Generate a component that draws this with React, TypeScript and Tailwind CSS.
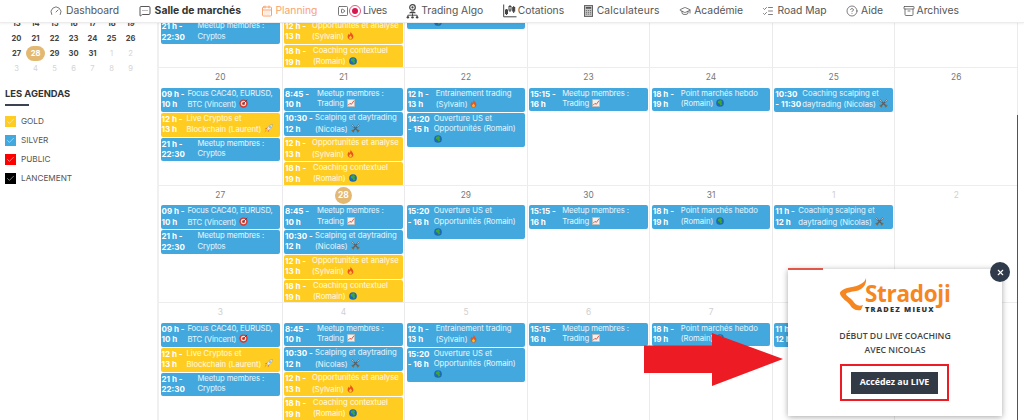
import React from "react";
import { Gauge, MessageSquareMore, CalendarDays, SquarePlay, GraduationCap, ListChecks, CircleHelp, Archive, Check, X } from "lucide-react";

const Target = () => (
  <svg viewBox="0 0 12 12" className="w-[9px] h-[9px] inline-block align-[-1.5px] ml-[3px]">
    <circle cx="6" cy="6" r="5.5" fill="#d9362b" />
    <circle cx="6" cy="6" r="3.6" fill="#f3e6df" />
    <circle cx="6" cy="6" r="2" fill="#d9362b" />
    <path d="M6 6 L11 1" stroke="#335" strokeWidth="1" />
  </svg>
);
const Chart = () => (
  <svg viewBox="0 0 12 12" className="w-[8px] h-[8px] inline-block align-[-1px] ml-[3px]">
    <rect x="0.5" y="0.5" width="11" height="11" fill="#f4f1ec" stroke="#b9b4ad" />
    <path d="M1.5 9.5 L4.5 6.5 L6.5 8 L10.5 2.5" fill="none" stroke="#df4a3e" strokeWidth="1.4" />
  </svg>
);
const Fire = () => (
  <svg viewBox="0 0 12 14" className="w-[7px] h-[9px] inline-block align-[-1.5px] ml-[3px]">
    <path d="M6 0 C7 3 11 5 11 9 C11 12 8.5 14 6 14 C3.5 14 1 12 1 9 C1 6.5 2.5 5.5 3 4 C4 5 4.5 5.5 4.5 6 C5.5 4 6.5 2 6 0Z" fill="#e8541c" />
    <path d="M6 7 C7 8.5 8.5 9.5 8.5 11 C8.5 12.5 7 13.5 6 13.5 C5 13.5 3.5 12.5 3.5 11 C3.5 9.5 5.5 9 6 7Z" fill="#fbc02d" />
  </svg>
);
const Swords = () => (
  <svg viewBox="0 0 12 12" className="w-[9px] h-[9px] inline-block align-[-1.5px] ml-[3px]">
    <path d="M1 1 L10 10 M11 1 L2 10" stroke="#56606a" strokeWidth="1.7" />
    <path d="M1 8 L4 11 M11 8 L8 11" stroke="#8a6a3c" strokeWidth="1.7" />
    <path d="M1 1 L3.5 3.5 M11 1 L8.5 3.5" stroke="#d6d8da" strokeWidth="1" />
  </svg>
);
const Globe = () => (
  <svg viewBox="0 0 12 12" className="w-[8px] h-[8px] inline-block align-[-1px] ml-[3px]">
    <circle cx="6" cy="6" r="5.8" fill="#1c6bb5" />
    <path d="M3 3 L7 1.5 L9 3.5 L8 6 L9.5 8 L7 10 L5.5 7 L3 6Z" fill="#3fa535" />
  </svg>
);
const Rocket = () => (
  <svg viewBox="0 0 12 12" className="w-[9px] h-[9px] inline-block align-[-1.5px] ml-[3px]">
    <path d="M11.5 0.5 C8 0.8 5 3 3.5 6.5 L5.5 8.5 C9 7 11.2 4 11.5 0.5Z" fill="#e4e6ea" stroke="#7c8794" strokeWidth="0.5" />
    <circle cx="8" cy="4" r="1.1" fill="#4a90c2" />
    <path d="M3.5 6.5 L1.5 7 L3 5 Z M5.5 8.5 L5 10.5 L7 9 Z" fill="#d9362b" />
    <path d="M3.8 8.2 L0.5 11.5 L2 8 Z" fill="#f39c1f" />
  </svg>
);

type Ev = { t: [string, string]; w: string; l: string[]; c: "b" | "y"; e?: React.ReactNode; own?: boolean; s?: string };

const focus: Ev = { t: ["09 h -", "10 h"], w: "w-[26px]", l: ["Focus CAC40, EURUSD,", "BTC (Vincent)"], c: "b", e: <Target />, s: "tracking-[-0.12px]" };
const live: Ev = { t: ["12 h -", "13 h"], w: "w-[25px]", l: ["Live Cryptos et", "Blockchain (Laurent)"], c: "y", e: <Rocket /> };
const cryptos: Ev = { t: ["21 h -", "22:30"], w: "w-[36px]", l: ["Meetup membres :", "Cryptos"], c: "b", s: "tracking-[-0.1px]" };
const trading: Ev = { t: ["8:45 -", "10 h"], w: "w-[32px]", l: ["Meetup membres :", "Trading"], c: "b", e: <Chart />, s: "tracking-[-0.1px]" };
const scalp: Ev = { t: ["10:30 -", "12 h"], w: "w-[30px]", l: ["Scalping et daytrading", "(Nicolas)"], c: "b", e: <Swords /> };
const oppo: Ev = { t: ["12 h -", "13 h"], w: "w-[27px]", l: ["Opportunités et analyse", "(Sylvain)"], c: "y", e: <Fire /> };
const ctx: Ev = { t: ["18 h -", "19 h"], w: "w-[28px]", l: ["Coaching contextuel", "(Romain)"], c: "y", e: <Globe /> };
const entr: Ev = { t: ["12 h -", "13 h"], w: "w-[28px]", l: ["Entrainement trading", "(Sylvain)"], c: "b", e: <Fire /> };
const ouv14: Ev = { t: ["14:20", "- 15 h"], w: "w-[26px]", l: ["Ouverture US et", "Opportunités (Romain)", ""], c: "b", e: <Globe />, own: true };
const ouv15: Ev = { t: ["15:20", "- 16 h"], w: "w-[26px]", l: ["Ouverture US et", "Opportunités (Romain)", ""], c: "b", e: <Globe />, own: true };
const meet15: Ev = { t: ["15:15 -", "16 h"], w: "w-[32px]", l: ["Meetup membres :", "Trading"], c: "b", e: <Chart />, s: "tracking-[-0.1px]" };
const point: Ev = { t: ["18 h -", "19 h"], w: "w-[28px]", l: ["Point marchés hebdo", "(Romain)"], c: "b", e: <Globe /> };
const coach1: Ev = { t: ["10:30", "- 11:30"], w: "w-[27px]", l: ["Coaching scalping et", "daytrading (Nicolas)"], c: "b", e: <Swords /> };
const coach2: Ev = { t: ["11 h -", "12 h"], w: "w-[23px]", l: ["Coaching scalping et", "daytrading (Nicolas)"], c: "b", e: <Swords /> };

type Day = { d: string; muted?: boolean; today?: boolean; ev: Ev[] };
const weeks: Day[][] = [
  [
    { d: "13", ev: [focus, live, cryptos] },
    { d: "14", ev: [trading, scalp, oppo, ctx] },
    { d: "15", ev: [entr, ouv14] },
    { d: "16", ev: [] }, { d: "17", ev: [] }, { d: "18", ev: [] }, { d: "19", ev: [] },
  ],
  [
    { d: "20", ev: [focus, live, cryptos] },
    { d: "21", ev: [trading, scalp, oppo, ctx] },
    { d: "22", ev: [entr, ouv14] },
    { d: "23", ev: [meet15] },
    { d: "24", ev: [point] },
    { d: "25", ev: [coach1] },
    { d: "26", ev: [] },
  ],
  [
    { d: "27", ev: [focus, cryptos] },
    { d: "28", today: true, ev: [trading, scalp, oppo, ctx] },
    { d: "29", ev: [ouv15] },
    { d: "30", ev: [meet15] },
    { d: "31", ev: [point] },
    { d: "1", muted: true, ev: [coach2] },
    { d: "2", muted: true, ev: [] },
  ],
  [
    { d: "3", muted: true, ev: [focus, live, cryptos] },
    { d: "4", muted: true, ev: [trading, scalp, oppo, ctx] },
    { d: "5", muted: true, ev: [entr, ouv15] },
    { d: "6", muted: true, ev: [meet15] },
    { d: "7", muted: true, ev: [point] },
    { d: "8", muted: true, ev: [coach2] },
    { d: "9", muted: true, ev: [] },
  ],
];

function Event({ ev }: { ev: Ev }) {
  return (
    <div className={`flex rounded-[2px] py-px pl-px leading-[10.8px] ${ev.c === "b" ? "bg-[#42a8de]" : "bg-[#ffcd22]"}`}>
      <div className={`${ev.w} shrink-0 whitespace-nowrap text-[8px] font-bold text-white`}>
        <div>{ev.t[0]}</div>
        <div>{ev.t[1]}</div>
      </div>
      <div className={`min-w-0 whitespace-nowrap text-[7.7px] text-white/90 ${ev.s ?? ""}`}>
        {ev.l.map((line, i) => (
          <div key={i}>
            {line}
            {i === ev.l.length - 1 ? (ev.own ? <span className="-ml-[3px]">{ev.e}</span> : ev.e) : null}
          </div>
        ))}
      </div>
    </div>
  );
}

const AlgoIcon = () => (
  <svg viewBox="0 0 14 16" className="w-[13px] h-[15px]" fill="none">
    <circle cx="7" cy="3.6" r="3" fill="#fff" stroke="#444" strokeWidth="1.3" />
    <circle cx="7" cy="3.6" r="1.2" fill="#444" />
    <path d="M3.5 10 C3.5 7.5 10.5 7.5 10.5 10 Z" fill="#444" />
    <path d="M7 10 V13 M2 14 V12 H12 V14" stroke="#444" strokeWidth="1" />
    <circle cx="2" cy="14.3" r="1.3" fill="#444" />
    <circle cx="7" cy="14.3" r="1.3" fill="#444" />
    <circle cx="12" cy="14.3" r="1.3" fill="#444" />
  </svg>
);
const CotIcon = () => (
  <svg viewBox="0 0 14 14" className="w-[14px] h-[14px]" fill="none" stroke="#444" strokeWidth="1">
    <path d="M0.7 0.5 V12.8 H13.5" />
    <path d="M3.5 5 V11 M7 1 V8 M10.7 2 V9" />
    <rect x="2.5" y="6" width="2" height="3.6" fill="#444" />
    <rect x="6" y="2.5" width="2" height="3.6" fill="#fff" />
    <rect x="9.7" y="3.5" width="2" height="3.6" fill="#444" />
  </svg>
);
const CalcIcon = () => (
  <svg viewBox="0 0 10 13" className="w-[9px] h-[12px]">
    <rect x="0.5" y="0.5" width="9" height="12" fill="#c9c9c9" stroke="#555" />
    <rect x="2" y="2" width="6" height="2" fill="#555" />
    <path d="M2 6h1.4M4.3 6h1.4M6.6 6h1.4M2 8h1.4M4.3 8h1.4M6.6 8h1.4M2 10h1.4M4.3 10h1.4M6.6 10h1.4" stroke="#666" strokeWidth="1" />
  </svg>
);

const iconCls = "w-[12px] h-[12px] text-[#555] shrink-0";

function Nav() {
  const item = "flex items-center whitespace-nowrap";
  return (
    <nav className="relative z-10 flex h-[23px] shrink-0 items-center gap-[19.5px] bg-white pl-[50px] text-[10.3px] text-[#555] border-b border-[#ececec] shadow-[0_1px_2px_rgba(0,0,0,0.06)]">
      <div className={`${item} gap-[4px]`}><Gauge className={iconCls} strokeWidth={1.6} /><span>Dashboard</span></div>
      <div className={`${item} gap-[4px] font-bold text-[#333]`}><MessageSquareMore className="w-[12px] h-[12px] text-[#444] shrink-0" strokeWidth={1.8} /><span className="text-[10.4px]">Salle de marchés</span></div>
      <div className={`${item} gap-[3px] text-[#f9a26c]`}><CalendarDays className="w-[12px] h-[12px] text-[#f9a26c] shrink-0" strokeWidth={2} /><span>Planning</span></div>
      <div className={`${item} gap-[0.5px]`}>
        <SquarePlay className={iconCls} strokeWidth={1.6} />
        <span className="flex h-[12px] w-[12px] items-center justify-center rounded-full border border-[#e8557a]"><span className="h-[6px] w-[6px] rounded-full bg-[#d6174f]" /></span>
        <span className="ml-[1px] tracking-[-0.3px]">Lives</span>
      </div>
      <div className={`${item} gap-[2px]`}><AlgoIcon /><span>Trading Algo</span></div>
      <div className={`${item} gap-[1px]`}><CotIcon /><span>Cotations</span></div>
      <div className={`${item} gap-[4px]`}><CalcIcon /><span className="tracking-[0.2px]">Calculateurs</span></div>
      <div className={`${item} gap-[3px]`}><GraduationCap className={iconCls} strokeWidth={1.6} /><span>Académie</span></div>
      <div className={`${item} gap-[3px]`}><ListChecks className={iconCls} strokeWidth={1.5} /><span>Road Map</span></div>
      <div className={`${item} gap-[3px]`}><CircleHelp className={iconCls} strokeWidth={1.5} /><span>Aide</span></div>
      <div className={`${item} gap-[2px]`}><Archive className={iconCls} strokeWidth={1.6} /><span>Archives</span></div>
    </nav>
  );
}

const mini = [
  ["13", "14", "15", "16", "17", "18", "19"],
  ["20", "21", "22", "23", "24", "25", "26"],
  ["27", "28", "29", "30", "31", "1", "2"],
  ["3", "4", "5", "6", "7", "8", "9"],
];
const agendas = [
  { n: "GOLD", c: "bg-[#ffcd22]" },
  { n: "SILVER", c: "bg-[#42a8de]" },
  { n: "PUBLIC", c: "bg-[#ff0000]" },
  { n: "LANCEMENT", c: "bg-black" },
];

function Sidebar() {
  return (
    <aside className="w-[159px] shrink-0 border-r-2 border-[#f0f0f0] pl-[5px] -mt-[7px]">
      <div className="ml-[2px] grid w-[133px] grid-cols-7 text-[7.6px] font-bold text-[#444]">
        {mini.map((row, r) =>
          row.map((d, i) => {
            const muted = r === 3 || (r === 2 && i > 4);
            const today = d === "28";
            return (
              <div key={`${r}-${i}`} className="flex h-[15px] items-center justify-center">
                <span className={today ? "flex h-[15px] w-[19px] items-center justify-center rounded-full bg-[#e3b873] text-white" : muted ? "text-[#d4d4d4] font-normal" : ""}>{d}</span>
              </div>
            );
          })
        )}
      </div>
      <h3 className="mt-[11px] text-[9.4px] font-bold leading-[14px] text-[#333]">LES AGENDAS</h3>
      <div className="mt-[3px] h-[2px] w-[24px] bg-[#3b4252]" />
      <ul className="mt-[10px] flex flex-col gap-[8px]">
        {agendas.map((a) => (
          <li key={a.n} className="flex items-center gap-[5px] text-[8.2px] leading-[11px] text-[#555]">
            <span className={`flex h-[11px] w-[11px] items-center justify-center ${a.c}`}>
              <Check className="h-[9px] w-[9px] text-white/85" strokeWidth={1.5} />
            </span>
            {a.n}
          </li>
        ))}
      </ul>
    </aside>
  );
}

function Calendar() {
  return (
    <section className="-mt-[72.5px] w-[859px] shrink-0 border-r border-[#ebebeb]">
      {weeks.map((w, r) => (
        <div key={r} className="grid h-[117.5px] grid-cols-7 border-b border-[#ededed]">
          {w.map((c, i) => (
            <div key={i} className="min-w-0 overflow-hidden border-l border-[#ebebeb] first:border-l-0 px-[1.5px]">
              <div className="flex h-[19.5px] items-center justify-center text-[8.4px]">
                {c.today ? (
                  <span className="flex h-[17px] w-[17px] items-center justify-center rounded-full bg-[#e3b873] font-bold text-white">{c.d}</span>
                ) : (
                  <span className={c.muted ? "text-[#cfcfcf]" : "text-[#777]"}>{c.d}</span>
                )}
              </div>
              <div className="flex flex-col gap-px">
                {c.ev.map((e, k) => <Event key={k} ev={e} />)}
              </div>
            </div>
          ))}
        </div>
      ))}
    </section>
  );
}

function Popup() {
  return (
    <div className="absolute left-[788px] top-[269px] h-[147px] w-[214px] bg-white shadow-[0_1px_6px_rgba(0,0,0,0.35)] z-20 flex flex-col items-center">
      <div className="absolute left-0 -top-[1px] h-[2px] w-[35px] bg-[#e0574a]" />
      <button className="absolute -right-[8px] -top-[7px] flex h-[20px] w-[20px] items-center justify-center rounded-full bg-[#2f3a4a]">
        <X className="h-[9px] w-[9px] text-white" strokeWidth={3} />
      </button>
      <div className="relative mt-[9px] h-[34px] w-[112px]">
        <svg viewBox="0 0 40 34" className="absolute left-0 top-0 h-[34px] w-[40px]" fill="none">
          <path d="M27 0 C26 5 19 8 13 9 C6 10 0 13 1 16 C3 21 8 23 11 27 C13 31 17 33 22 32 L24 27 C19 29 16 26 14 23 C12 20 7 18 7 16 C8 14 13 14 17 13 C23 12 28 7 27 0Z" fill="#f6861f" />
        </svg>
        <div className="absolute left-[26px] top-[2px] text-[22.5px] font-bold leading-[28px] tracking-[-0.3px] text-[#f6861f] [font-family:'Open_Sans',sans-serif]">Stradoji</div>
        <div className="absolute left-[26px] top-[27px] whitespace-nowrap text-[7.4px] font-extrabold leading-[8px] tracking-[1.2px] text-[#333] [font-family:'Open_Sans',sans-serif]">TRADEZ MIEUX</div>
      </div>
      <p className="mt-[17px] text-center text-[8.7px] font-semibold leading-[14px] text-[#444] [font-family:'Open_Sans',sans-serif]">
        DÉBUT DU LIVE COACHING<br />AVEC NICOLAS
      </p>
      <div className="mt-[7px] border-[2px] border-[#ed1c24] px-[9px] py-[5.5px] ml-[-1px]">
        <button className="flex h-[22px] w-[87px] items-center justify-center bg-[#323a45] text-[8.8px] font-bold text-white [font-family:'Open_Sans',sans-serif]">Accédez au LIVE</button>
      </div>
    </div>
  );
}

export default function App() {
  return (
    <div className="relative flex h-[420px] w-[1024px] flex-col overflow-hidden bg-white [font-family:Inter,'Noto_Sans',sans-serif]">
      <Nav />
      <main className="flex min-h-0 flex-1 overflow-hidden">
        <Sidebar />
        <Calendar />
      </main>
      <div className="absolute left-[1017px] top-[115px] h-[305px] w-px bg-[#555]" />
      <svg viewBox="0 0 140 54" className="absolute left-[644px] top-[332px] z-30 h-[54px] w-[140px]">
        <path d="M0 13.5 H68 V1 L139 27 L68 54 V41 H0 Z" fill="#ed1c24" />
      </svg>
      <Popup />
    </div>
  );
}
